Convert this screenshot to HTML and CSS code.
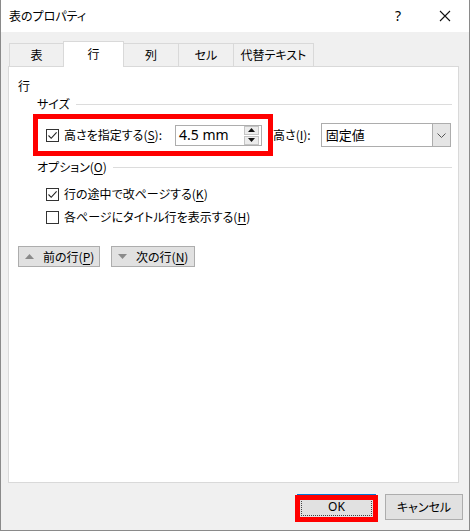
FILE: index.html
```html
<!DOCTYPE html>
<html lang="ja">
<head>
<meta charset="utf-8">
<title>表のプロパティ</title>
<link rel="stylesheet" href="styles.css">
</head>
<body>
<div class="window">
  <div class="titlebar">
    <span class="title">表のプロパティ</span>
    <span class="tb-btn help">?</span>
    <span class="tb-btn close"><svg width="12" height="12" viewBox="0 0 12 12"><path d="M1 1L11 11M11 1L1 11" stroke="#111" stroke-width="1.1" fill="none"/></svg></span>
  </div>
  <div class="body">
    <div class="tabs">
      <div class="tab w1">表</div>
      <div class="tab active w2">行</div>
      <div class="tab w3">列</div>
      <div class="tab w4">セル</div>
      <div class="tab w5">代替テキスト</div>
    </div>
    <div class="panel">
      <div class="sec-title">行</div>
      <div class="group-head"><span>サイズ</span><i class="rule"></i></div>
      <div class="size-row">
        <div class="highlight">
          <span class="check"><svg width="11" height="11" viewBox="0 0 11 11"><path d="M1.5 5.5L4.2 8.3L9.6 2.4" stroke="#222" stroke-width="1.1" fill="none"/></svg></span>
          <span class="lbl">高さを指定する(<u>S</u>):</span>
          <div class="spin">
            <span class="val">4.5 mm</span>
            <div class="spin-btns">
              <span class="sb"><svg width="7" height="4" viewBox="0 0 7 4"><path d="M0 4L3.5 0L7 4Z" fill="#111"/></svg></span>
              <span class="sb"><svg width="7" height="4" viewBox="0 0 7 4"><path d="M0 0L3.5 4L7 0Z" fill="#111"/></svg></span>
            </div>
          </div>
        </div>
        <span class="lbl">高さ(<u>I</u>):</span>
        <div class="combo">
          <span class="combo-val">固定値</span>
          <span class="drop"><svg width="9" height="5" viewBox="0 0 9 5"><path d="M0.5 0.5L4.5 4.5L8.5 0.5" stroke="#555" stroke-width="1" fill="none"/></svg></span>
        </div>
      </div>
      <div class="group-head opt"><span>オプション(<u>O</u>)</span><i class="rule"></i></div>
      <div class="check-row first">
        <span class="check"><svg width="11" height="11" viewBox="0 0 11 11"><path d="M1.5 5.5L4.2 8.3L9.6 2.4" stroke="#222" stroke-width="1.1" fill="none"/></svg></span>
        <span class="lbl">行の途中で改ページする(<u>K</u>)</span>
      </div>
      <div class="check-row">
        <span class="check"></span>
        <span class="lbl">各ページにタイトル行を表示する(<u>H</u>)</span>
      </div>
      <div class="nav">
        <span class="btn nav-btn w-prev"><svg width="9" height="5" viewBox="0 0 9 5"><path d="M0 5L4.5 0L9 5Z" fill="#8a8a8a"/></svg><span class="nav-lbl">前の行(<u>P</u>)</span></span>
        <span class="btn nav-btn w-next"><svg width="9" height="5" viewBox="0 0 9 5"><path d="M0 0L4.5 5L9 0Z" fill="#8a8a8a"/></svg><span class="nav-lbl">次の行(<u>N</u>)</span></span>
      </div>
    </div>
    <div class="footer">
      <span class="btn ok"><span class="focus">OK</span><i class="mark"></i></span>
      <span class="btn cancel">キャンセル</span>
    </div>
  </div>
</div>
</body>
</html>
```

FILE: styles.css
```css
* { box-sizing: border-box; }
html, body { margin: 0; padding: 0; background: #ffffff; }
body {
  font-family: "Noto Sans CJK JP", "Noto Sans", sans-serif;
  font-size: 12px;
  color: #000;
  line-height: 16px;
  font-feature-settings: "palt";
}
u { text-decoration: underline; text-underline-offset: 2px; }

.window {
  width: 470px;
  height: 531px;
  border-left: 1px solid #8a8a8a;
  border-right: 1px solid #8a8a8a;
  border-bottom: 1px solid #8a8a8a;
  display: flex;
  flex-direction: column;
  background: #f0f0f0;
}

.titlebar {
  height: 32px;
  background: #ffffff;
  display: flex;
  align-items: center;
  flex: none;
}
.title { padding-left: 8px; font-size: 12px; }
.tb-btn {
  width: 46px;
  height: 32px;
  display: flex;
  align-items: center;
  justify-content: center;
}
.help { margin-left: auto; font-size: 14px; font-family: "Noto Sans", sans-serif; }
.close { width: 48px; }

.body { flex: 1; display: flex; flex-direction: column; }

.tabs {
  display: flex;
  align-items: flex-end;
  height: 25px;
  margin: 9px 0 0 8px;
}
.tab {
  height: 23px;
  border: 1px solid #d9d9d9;
  border-bottom: none;
  background: #f0f0f0;
  display: flex;
  align-items: center;
  justify-content: center;
  margin-left: -1px;
}
.tab.active {
  height: 26px;
  margin-bottom: -1px;
  background: #ffffff;
  position: relative;
  z-index: 1;
  padding-bottom: 2px;
}
.w1 { width: 55px; margin-left: 0; }
.w2 { width: 61px; }
.w3 { width: 56px; }
.w4 { width: 56px; }
.w5 { width: 81px; }

.panel {
  margin: 0 10px 0 7px;
  height: 417px;
  background: #ffffff;
  border: 1px solid #d9d9d9;
  flex: none;
}

.sec-title { margin-top: 11px; padding-left: 9px; }

.group-head {
  display: flex;
  align-items: center;
  margin-top: 2px;
  padding-left: 28px;
  padding-right: 6px;
}
.group-head.opt { margin-top: 3px; }
.rule { flex: 1; height: 1px; background: #dcdcdc; margin-left: 6px; }

.size-row {
  display: flex;
  align-items: center;
  margin-top: 2px;
  padding-left: 24px;
}
.highlight {
  height: 42px;
  border: 5px solid #ff0000;
  display: flex;
  align-items: center;
  padding: 0 6px 0 8px;
}
.check {
  width: 13px;
  height: 13px;
  border: 1px solid #333;
  background: #fff;
  display: inline-flex;
  align-items: center;
  justify-content: center;
  flex: none;
}
.highlight .lbl { margin-left: 5px; }

.spin {
  margin-left: 13px;
  width: 87px;
  height: 21px;
  border: 1px solid #adadad;
  background: #fff;
  display: flex;
  align-items: center;
}
.val { flex: 1; padding-left: 3px; font-size: 14px; font-family: "Noto Sans", sans-serif; }
.spin-btns {
  width: 15px;
  height: 19px;
  display: flex;
  flex-direction: column;
  gap: 1px;
  margin-right: 2px;
}
.sb {
  flex: 1;
  border: 1px solid #c4c4c4;
  background: #ececec;
  display: flex;
  align-items: center;
  justify-content: center;
}

.combo {
  margin-left: 10px;
  width: 130px;
  height: 24px;
  border: 1px solid #adadad;
  background: #fff;
  display: flex;
  align-items: center;
}
.combo-val { flex: 1; padding-left: 4px; font-size: 13px; }
.drop {
  width: 18px;
  height: 22px;
  background: #e5e5e5;
  border-left: 1px solid #adadad;
  display: flex;
  align-items: center;
  justify-content: center;
}

.check-row {
  display: flex;
  align-items: center;
  gap: 5px;
  padding-left: 37px;
  margin-top: 7px;
}
.check-row.first { margin-top: 11px; }

.nav {
  display: flex;
  gap: 11px;
  padding-left: 9px;
  margin-top: 21px;
}
.btn {
  height: 21px;
  background: #e1e1e1;
  border: 1px solid #adadad;
  display: inline-flex;
  align-items: center;
  justify-content: center;
  white-space: nowrap;
}
.nav-btn { justify-content: flex-start; padding-left: 6px; gap: 9px; }
.w-prev { width: 82px; }
.w-next { width: 84px; }

.footer {
  display: flex;
  justify-content: flex-end;
  gap: 9px;
  padding: 11px 6px 0 0;
}
.footer .btn { height: 26px; }
.ok {
  width: 79px;
  border-color: #0078d7;
  position: relative;
}
.focus {
  width: 71px;
  height: 18px;
  border: 1px dotted #444;
  display: flex;
  align-items: center;
  justify-content: center;
  font-family: "Noto Sans", sans-serif;
}
.mark {
  position: absolute;
  top: 0px;
  left: -3px;
  right: -3px;
  bottom: -3px;
  border: 5px solid #ff0000;
}
.cancel { width: 78px; }
```
